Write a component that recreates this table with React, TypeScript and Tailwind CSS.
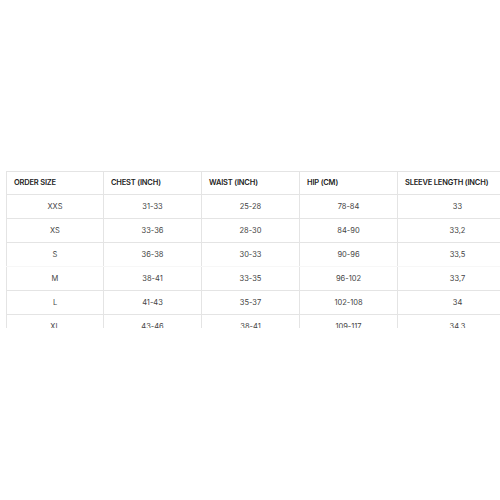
import React from 'react';

const headers = ['ORDER SIZE', 'CHEST (INCH)', 'WAIST (INCH)', 'HIP (CM)', 'SLEEVE LENGTH (INCH)'];

const rows = [
  ['XXS', '31-33', '25-28', '78-84', '33'],
  ['XS', '33-36', '28-30', '84-90', '33,2'],
  ['S', '36-38', '30-33', '90-96', '33,5'],
  ['M', '38-41', '33-35', '96-102', '33,7'],
  ['L', '41-43', '35-37', '102-108', '34'],
  ['XL', '43-46', '38-41', '109-117', '34,3'],
];

const colWidths = ['w-[97px]', 'w-[98px]', 'w-[98px]', 'w-[98px]', 'w-[120px]'];

export default function App() {
  return (
    <div className="w-[500px] h-[500px] bg-white overflow-hidden" style={{ fontFamily: 'Inter, "Noto Sans", sans-serif' }}>
      <div className="pt-[171px] pl-[6px]">
        <div className="h-[157px] overflow-hidden w-[520px]">
          <table className="border-collapse table-fixed text-[7.5px] text-[#444]">
            <thead>
              <tr className="h-[23px]">
                {headers.map((h, i) => (
                  <th
                    key={h}
                    className={`${colWidths[i]} border border-[#e4e4e4] text-left font-semibold text-[#222] pl-[7px] pr-0 tracking-tight`}
                  >
                    {h}
                  </th>
                ))}
              </tr>
            </thead>
            <tbody>
              {rows.map((r, ri) => (
                <tr key={r[0]} className="h-[24px]">
                  {r.map((c, ci) => (
                    <td
                      key={ci}
                      className={`border border-[#e4e4e4] text-center ${ri === 2 ? 'border-b-[#f7f7f7]' : ''} ${ri === 3 ? 'border-t-[#f7f7f7]' : ''}`}
                    >
                      {c}
                    </td>
                  ))}
                </tr>
              ))}
            </tbody>
          </table>
        </div>
      </div>
    </div>
  );
}
